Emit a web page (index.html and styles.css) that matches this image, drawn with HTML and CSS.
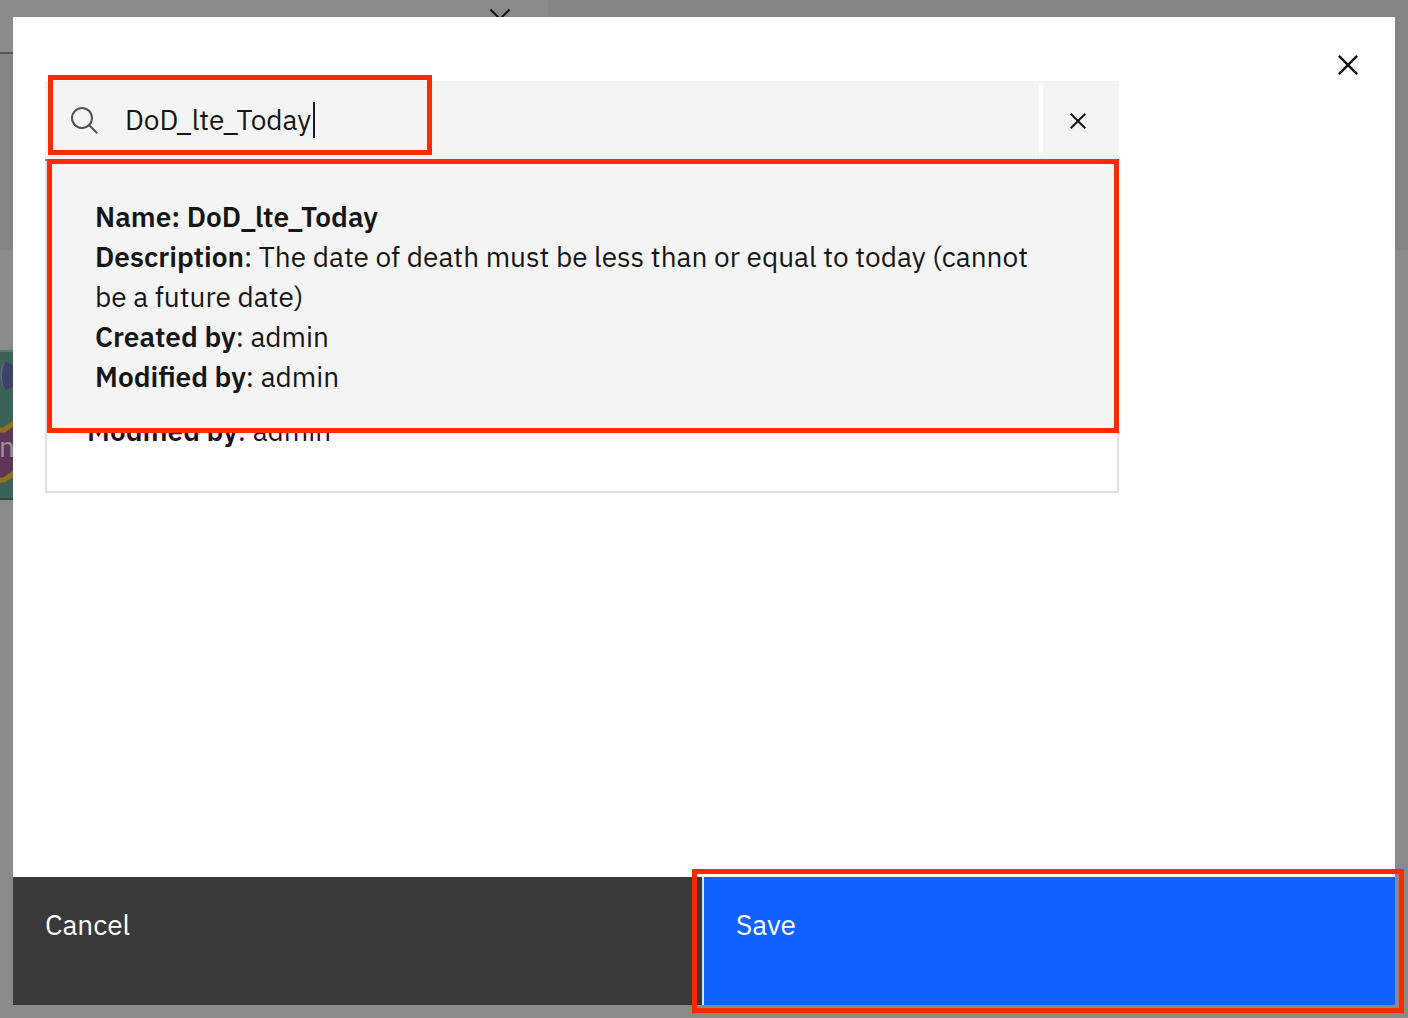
FILE: index.html
```
<!DOCTYPE html>
<html lang="en">
<head>
<meta charset="utf-8">
<meta name="viewport" content="width=device-width, initial-scale=1">
<title>Select rule</title>
<link rel="stylesheet" href="styles.css">
</head>
<body>
<div class="workspace">
  <div class="workspace-header">
    <div class="workspace-select">
      <svg class="workspace-chevron" width="32" height="32" viewBox="0 0 32 32" aria-hidden="true"><path d="M6.500 9.500l9.500 9.500L25.500 9.500" fill="none" stroke="#161616" stroke-width="2"/></svg>
    </div>
  </div>
  <svg class="workspace-node" width="40" height="150" viewBox="0 0 40 150" aria-hidden="true">
    <rect width="40" height="150" fill="#3c6157"/>
    <rect width="40" height="2" fill="#53796f"/>
    <rect y="148" width="40" height="2" fill="#304b45"/>
    <path d="M5 12C-1 16-1 33 5 40C12 39 18 34 18 26S12 13 5 12Z" fill="#3e4168"/>
    <path d="M5 12C-1 16-1 33 5 40C1 34 1 18 5 12Z" fill="#686988"/>
    <path d="M0 80h4L40 55v50L4 130H0z" fill="#5e3757"/>
    <path d="M0 80h4L40 55M0 130h4L40 105" fill="none" stroke="#8d7224" stroke-width="5"/>
    <text x="-1" y="107" font-size="28" fill="#969696">n</text>
  </svg>
</div>

<div class="overlay">
  <div class="modal" role="dialog" aria-label="Select rule">
    <button class="modal-close" type="button" aria-label="Close">
      <svg width="40" height="40" viewBox="0 0 32 32" fill="currentColor"><path d="M17.4141 16L24 9.4141 22.5859 8 16 14.5859 9.4143 8 8 9.4141 14.5859 16 8 22.5859 9.4143 24 16 17.4141 22.5859 24 24 22.5859z"/></svg>
    </button>
    <div class="modal-body">
      <div class="search">
        <label class="search-field">
          <svg class="search-icon" width="32" height="32" viewBox="0 0 32 32" fill="currentColor" aria-hidden="true"><path d="M29 27.5859l-7.5521-7.5521a11.0177 11.0177 0 1 0-1.4141 1.4141L27.5859 29ZM4 13a9 9 0 1 1 9 9A9.01 9.01 0 0 1 4 13Z"/></svg>
          <input class="search-input" type="text" value="DoD_lte_Today" aria-label="Search">
          <span class="search-caret"></span>
        </label>
        <button class="search-clear" type="button" aria-label="Clear search">
          <svg width="32" height="32" viewBox="0 0 32 32" fill="currentColor"><path d="M17.4141 16L24 9.4141 22.5859 8 16 14.5859 9.4143 8 8 9.4141 14.5859 16 8 22.5859 9.4143 24 16 17.4141 22.5859 24 24 22.5859z"/></svg>
        </button>
        <span class="marker marker-search"></span>
      </div>
      <div class="results">
        <div class="result-card">
          <p><b>Name: DoD_lte_Today</b></p>
          <p><b>Description</b>: The date of death must be less than or equal to today (cannot be a future date)</p>
          <p><b>Created by</b>: admin</p>
          <p><b>Modified by</b>: admin</p>
        </div>
        <p class="result-behind"><b>Modified by</b>: admin</p>
      </div>
    </div>
    <div class="modal-footer">
      <button class="action action-cancel" type="button">Cancel</button>
      <button class="action action-save" type="button">Save<span class="marker marker-save"></span></button>
    </div>
  </div>
</div>
</body>
</html>
```
FILE: styles.css
```
* {
  box-sizing: border-box;
}

body {
  margin: 0;
  min-height: 100vh;
  background: #8a8a8a;
  color: #161616;
  font-family: "IBM Plex Sans", Roboto, "Noto Sans", sans-serif;
  font-size: 28px;
  line-height: 40px;
}

p {
  margin: 0;
}

b {
  font-weight: 600;
}

button,
input {
  margin: 0;
  border: 0;
  padding: 0;
  border-radius: 0;
  background: none;
  color: inherit;
  font: inherit;
}

svg {
  display: block;
}

/* Dimmed page behind the dialog */
.workspace {
  display: flex;
  flex-direction: column;
  gap: 100px;
}

.workspace-header {
  height: 250px;
  background: #848484;
}

.workspace-select {
  display: flex;
  justify-content: flex-end;
  width: 548px;
  height: 54px;
  padding-right: 32px;
  border-bottom: 2px solid #555555;
  background: #8a8a8a;
}

/* Dialog */
.overlay {
  position: fixed;
  inset: 0;
  display: flex;
  padding: 17px 13px 13px;
}

.modal {
  position: relative;
  display: flex;
  flex: 1;
  flex-direction: column;
  background: #ffffff;
}

.modal-close {
  position: absolute;
  top: 28px;
  right: 27px;
}

.modal-body {
  flex: 1;
  padding: 64px 20% 0 32px;
}

/* Search */
.search {
  position: relative;
  display: flex;
  height: 80px;
  border-bottom: 2px solid #8d8d8d;
  background: #f4f4f4;
}

.search-field {
  display: flex;
  flex: 1;
  align-items: center;
  padding-left: 24px;
}

.search-icon {
  margin: 2px 24px 0 0;
  color: #525252;
}

.search-input {
  field-sizing: content;
  outline: none;
}

.search-caret {
  width: 2px;
  height: 36px;
  margin-left: 2px;
  background: #161616;
}

.search-clear {
  display: flex;
  align-items: center;
  justify-content: center;
  width: 80px;
  margin: 4px 0 2px;
  border-left: 4px solid #ffffff;
  padding-right: 6px;
}

/* Results */
.results {
  border: 2px solid #e0e0e0;
  border-top: 0;
  padding-bottom: 40px;
}

.result-card {
  position: relative;
  z-index: 1;
  margin: -2px -2px 0 0;
  border: 5px solid #ff2a00;
  padding: 33px 56px 31px 43px;
  background: #f4f4f4;
}

.result-behind {
  margin: -22px 0 0;
  padding-left: 40px;
}

/* Footer */
.modal-footer {
  display: grid;
  grid-template-columns: 1fr 1fr;
}

.action {
  display: flex;
  align-items: flex-start;
  height: 128px;
  padding: 28px 32px;
  color: #ffffff;
}

.action-cancel {
  background: #393939;
}

.action-save {
  position: relative;
  margin-left: -2px;
  border-left: 2px solid #e0e0e0;
  background: #0f62fe;
}

/* Red callouts */
.marker {
  position: absolute;
  border: 5px solid #ff2a00;
  pointer-events: none;
}

.marker-search {
  top: -6px;
  left: 3px;
  width: 384px;
  height: 80px;
}

.marker-save {
  inset: -8px -9px;
  left: -12px;
}
```
